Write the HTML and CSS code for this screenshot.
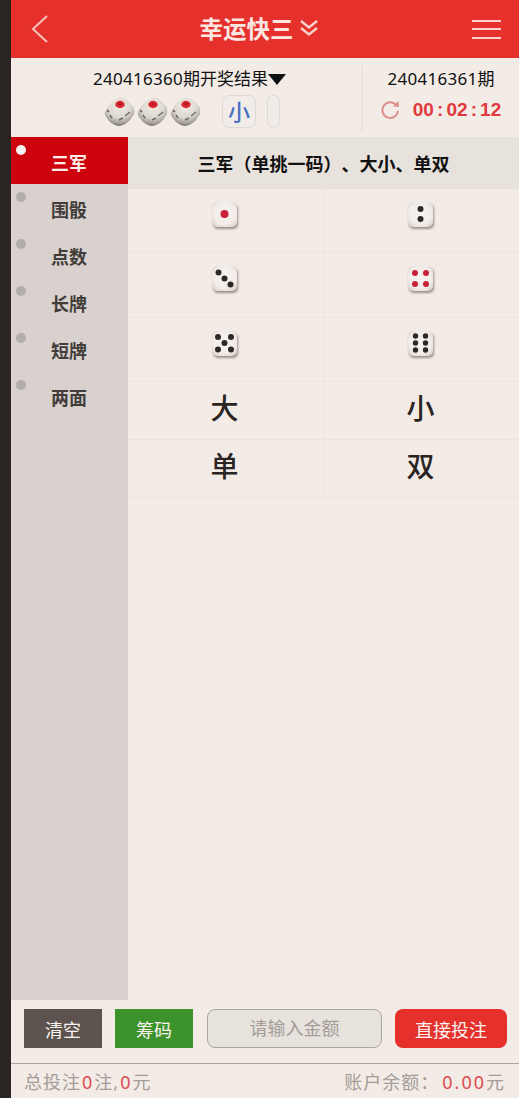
FILE: index.html
```html
<!DOCTYPE html>
<html lang="zh-CN">
  <head>
    <meta charset="UTF-8" />
    <meta name="viewport" content="width=device-width, initial-scale=1.0" />
    <title>幸运快三</title>
    <link rel="stylesheet" href="styles.css">
  </head>
  <body>
    <svg class="defs" width="0" height="0">
      <defs>
        <radialGradient id="faceFill" cx="50%" cy="45%" r="65%">
          <stop offset="0%" stop-color="#f7f3f0" />
          <stop offset="70%" stop-color="#f1ece8" />
          <stop offset="100%" stop-color="#d9d3cf" />
        </radialGradient>
        <radialGradient id="cubeFill" cx="50%" cy="30%" r="70%">
          <stop offset="0%" stop-color="#f1ede6" />
          <stop offset="58%" stop-color="#dcd7ce" />
          <stop offset="85%" stop-color="#a8a39a" />
          <stop offset="100%" stop-color="#76726b" />
        </radialGradient>
        <symbol id="cube" viewBox="0 0 31 30">
          <path d="M1 15 L4 9 Q9 3 15 1 Q19 0 23 3 L29 9 Q31 13 30 17 L26 23 Q20 29 14 29 Q10 28 6 25 L2 20 Q0 17 1 15Z" fill="url(#cubeFill)" />
          <ellipse cx="16" cy="7.500" rx="4.700" ry="3.700" fill="#dc2a30" />
          <ellipse cx="16" cy="7" rx="2.500" ry="1.600" fill="#b81c28" />
          <path d="M3 13 L5 15 M6 18 L8 21" stroke="#55524e" stroke-width="1.300" />
          <path d="M15 23 L19 21 M21 19 L26 15" stroke="#6f6b66" stroke-width="1.400" />
        </symbol>
      </defs>
    </svg>

    <div class="app">
      <div class="header">
        <svg class="back-icon" width="20" height="30" viewBox="0 0 20 30">
          <path d="M17 2 L3 15 L17 28" fill="none" stroke="#f6c4bc" stroke-width="2" />
        </svg>
        <div class="title">
          幸运快三
          <svg width="18" height="18" viewBox="0 0 18 18">
            <path d="M1 1 L9 7.500 L17 1 M1 8 L9 14.500 L17 8" fill="none" stroke="#f8d3cd" stroke-width="2.400" />
          </svg>
        </div>
        <div class="menu-icon">
          <span></span>
          <span></span>
          <span></span>
        </div>
      </div>

      <div class="result-bar">
        <div class="last-result">
          <div class="issue-line"><span class="num">240416360</span>期开奖结果<span class="arrow"></span></div>
          <div class="dice-line">
            <svg class="cube" width="31" height="30"><use href="#cube" /></svg>
            <svg class="cube" width="31" height="30"><use href="#cube" /></svg>
            <svg class="cube" width="31" height="30"><use href="#cube" /></svg>
            <span class="chip chip-text">小</span>
            <span class="chip chip-empty"></span>
          </div>
        </div>
        <div class="next-issue">
          <div class="issue-line"><span class="num">240416361</span>期</div>
          <div class="timer-line">
            <svg width="20" height="20" viewBox="0 0 20 20">
              <path d="M16.500 5.500 A7.800 7.800 0 1 0 18 11" fill="none" stroke="#dd8f8c" stroke-width="2" />
              <path d="M13 6.500 L19 7 L18.500 1 Z" fill="#dd8f8c" />
            </svg>
            <span class="timer">00<span class="sep">:</span>02<span class="sep">:</span>12</span>
          </div>
        </div>
      </div>

      <div class="main">
        <div class="sidebar">
          <div class="side-item active">三军</div>
          <div class="side-item">围骰</div>
          <div class="side-item">点数</div>
          <div class="side-item">长牌</div>
          <div class="side-item">短牌</div>
          <div class="side-item">两面</div>
        </div>
        <div class="content">
          <div class="content-title">三军（单挑一码）、大小、单双</div>
          <div class="bet-grid">
            <div class="cell die-cell">
              <svg class="die" width="27" height="27" viewBox="0 0 27 27">
                <rect x="1" y="1" width="25" height="25" rx="5" fill="url(#faceFill)" />
                <circle cx="13.500" cy="13" r="4" fill="#c8203a" />
              </svg>
            </div>
            <div class="cell die-cell">
              <svg class="die" width="27" height="27" viewBox="0 0 27 27">
                <rect x="1" y="1" width="25" height="25" rx="5" fill="url(#faceFill)" />
                <circle cx="13.500" cy="8" r="3" fill="#2e2724" />
                <circle cx="13.500" cy="18" r="3" fill="#2e2724" />
              </svg>
            </div>
            <div class="cell die-cell row-3">
              <svg class="die" width="27" height="27" viewBox="0 0 27 27">
                <rect x="1" y="1" width="25" height="25" rx="5" fill="url(#faceFill)" />
                <circle cx="7.500" cy="7.500" r="3" fill="#2e2724" />
                <circle cx="13.500" cy="13.500" r="3" fill="#2e2724" />
                <circle cx="19.500" cy="19.500" r="3" fill="#2e2724" />
              </svg>
            </div>
            <div class="cell die-cell row-3">
              <svg class="die" width="27" height="27" viewBox="0 0 27 27">
                <rect x="1" y="1" width="25" height="25" rx="5" fill="url(#faceFill)" />
                <circle cx="8" cy="8" r="3" fill="#c8203a" />
                <circle cx="19" cy="8" r="3" fill="#c8203a" />
                <circle cx="8" cy="19" r="3" fill="#c8203a" />
                <circle cx="19" cy="19" r="3" fill="#c8203a" />
              </svg>
            </div>
            <div class="cell die-cell">
              <svg class="die" width="27" height="27" viewBox="0 0 27 27">
                <rect x="1" y="1" width="25" height="25" rx="5" fill="url(#faceFill)" />
                <circle cx="7" cy="7" r="3" fill="#2e2724" />
                <circle cx="20" cy="7" r="3" fill="#2e2724" />
                <circle cx="13.500" cy="13" r="3" fill="#2e2724" />
                <circle cx="7" cy="19.500" r="3" fill="#2e2724" />
                <circle cx="20" cy="19.500" r="3" fill="#2e2724" />
              </svg>
            </div>
            <div class="cell die-cell">
              <svg class="die" width="27" height="27" viewBox="0 0 27 27">
                <rect x="1" y="1" width="25" height="25" rx="5" fill="url(#faceFill)" />
                <circle cx="8.500" cy="6" r="2.700" fill="#2e2724" />
                <circle cx="18.500" cy="6" r="2.700" fill="#2e2724" />
                <circle cx="8.500" cy="13" r="2.700" fill="#2e2724" />
                <circle cx="18.500" cy="13" r="2.700" fill="#2e2724" />
                <circle cx="8.500" cy="20" r="2.700" fill="#2e2724" />
                <circle cx="18.500" cy="20" r="2.700" fill="#2e2724" />
              </svg>
            </div>
            <div class="cell word-cell">大</div>
            <div class="cell word-cell">小</div>
            <div class="cell word-cell">单</div>
            <div class="cell word-cell">双</div>
          </div>
        </div>
      </div>

      <div class="action-bar">
        <button class="btn btn-clear">清空</button>
        <button class="btn btn-chips">筹码</button>
        <div class="amount">请输入金额</div>
        <button class="btn btn-submit">直接投注</button>
      </div>

      <div class="footer">
        <div>总投注<span class="red">0</span>注,<span class="red">0</span>元</div>
        <div>账户余额：<span class="red balance">0.00</span>元</div>
      </div>
    </div>
  </body>
</html>
```

FILE: styles.css
```css
* {
  box-sizing: border-box;
}

body {
  margin: 0;
  padding-left: 11px;
  height: 100vh;
  overflow: hidden;
  background-color: #2a2422;
  font-family: "Noto Sans", "Noto Sans CJK SC", sans-serif;
  color: #111;
  text-spacing-trim: space-all;
}

.defs {
  position: absolute;
}

.app {
  display: flex;
  flex-direction: column;
  height: 100%;
  background-color: #f3ebe6;
}

.header {
  flex: none;
  height: 58px;
  padding: 0 18px 0 19px;
  display: flex;
  align-items: center;
  justify-content: space-between;
  background-color: #e6302c;
}

.title {
  display: flex;
  align-items: center;
  gap: 6px;
  margin-left: -5px;
  font-size: 23.500px;
  font-weight: 700;
  line-height: 30px;
  color: #fbe6e1;
}

.title svg {
  margin-top: -1px;
}

.menu-icon {
  display: flex;
  flex-direction: column;
  gap: 6.500px;
  width: 29px;
}

.menu-icon span {
  height: 2px;
  background-color: #f8d3cd;
}

.result-bar {
  flex: none;
  height: 79px;
  display: flex;
  padding-top: 8px;
}

.last-result {
  width: 352px;
  height: 66px;
  padding-left: 7px;
  text-align: center;
  border-right: 2px solid #e9e2dd;
}

.next-issue {
  flex: 1;
  text-align: center;
}

.issue-line {
  height: 26px;
  font-size: 17px;
  line-height: 26px;
}

.num {
  letter-spacing: 0.3px;
}

.arrow {
  display: inline-block;
  width: 0;
  height: 0;
  border-left: 9px solid transparent;
  border-right: 9px solid transparent;
  border-top: 11px solid #111;
}

.dice-line {
  display: flex;
  align-items: center;
  justify-content: center;
  margin-top: 3px;
  padding-left: 5px;
}

.cube {
  margin-right: 2px;
}

.chip {
  height: 33px;
  border: 1px solid #dedad6;
  border-radius: 7px;
  background-color: #f1ece8;
}

.chip-text {
  width: 34px;
  margin-left: 19px;
  font-size: 22px;
  font-weight: 500;
  line-height: 30px;
  color: #4a6fc4;
  text-align: center;
}

.chip-empty {
  width: 13px;
  margin-left: 11px;
}

.timer-line {
  display: flex;
  align-items: center;
  justify-content: center;
  gap: 13px;
  margin: 5px 0 0 -1px;
}

.timer {
  font-family: "Liberation Sans", sans-serif;
  font-size: 19px;
  font-weight: 700;
  line-height: 26px;
  color: #e03a3e;
}

.sep {
  display: inline-block;
  width: 12.500px;
  text-align: center;
}

.main {
  flex: 1;
  min-height: 0;
  display: flex;
}

.sidebar {
  flex: none;
  width: 117px;
  background-color: #d8d1cd;
}

.side-item {
  position: relative;
  height: 47px;
  padding: 12px 0 0 40px;
  font-size: 18px;
  font-weight: 700;
  line-height: 28px;
  color: #433d3a;
}

.side-item::before {
  content: "";
  position: absolute;
  left: 5px;
  top: 8px;
  width: 10px;
  height: 10px;
  border-radius: 50%;
  background-color: #b3aeaa;
}

.side-item.active {
  background-color: #cd040e;
  color: #fbeeea;
}

.side-item.active::before {
  background-color: #f8f4f1;
}

.content {
  flex: 1;
}

.content-title {
  height: 52px;
  font-size: 18px;
  font-weight: 700;
  line-height: 55px;
  text-align: center;
  background-color: #e8e2dd;
}

.bet-grid {
  display: grid;
  grid-template-columns: 196px 195px;
}

.cell {
  display: flex;
  justify-content: center;
  border-bottom: 1px solid #ebe4df;
  border-right: 1px solid #ebe4df;
}

.cell:nth-child(even) {
  border-right: none;
}

.die-cell {
  height: 64px;
  padding: 12px 2px 0 0;
}

.die-cell.row-3 {
  height: 65px;
}

.die {
  filter: drop-shadow(1px 2px 1px #98918b);
}

.word-cell {
  height: 58px;
  padding-right: 2px;
  font-size: 28px;
  font-weight: 500;
  line-height: 52px;
  color: #2a2422;
}

.action-bar {
  flex: none;
  height: 64px;
  padding: 9px 12px 0 13px;
  display: flex;
  align-items: flex-start;
  border-bottom: 1px solid #aaa5a1;
}

.btn {
  height: 39px;
  padding: 0;
  border: none;
  font-family: inherit;
  font-size: 18px;
  color: #fbf4f0;
}

.btn-clear {
  width: 78px;
  background-color: #5c534e;
}

.btn-chips {
  width: 78px;
  margin-left: 13px;
  background-color: #3c932c;
}

.amount {
  width: 175px;
  height: 39px;
  margin-left: 14px;
  border: 1px solid #aaa5a1;
  border-radius: 8px;
  background-color: #e8e2dd;
  font-size: 18px;
  line-height: 37px;
  text-align: center;
  color: #a39d99;
}

.btn-submit {
  width: 112px;
  margin-left: 13px;
  border-radius: 8px;
  background-color: #e6302c;
}

.footer {
  flex: none;
  height: 34px;
  padding: 0 14px 0 13px;
  display: flex;
  justify-content: space-between;
  align-items: center;
  font-size: 18px;
  letter-spacing: 1px;
  color: #a39d99;
}

.red {
  margin: 0 1px;
  color: #dc4a50;
}

.balance {
  margin: 0 0 0 3px;
  letter-spacing: 2px;
}
```
